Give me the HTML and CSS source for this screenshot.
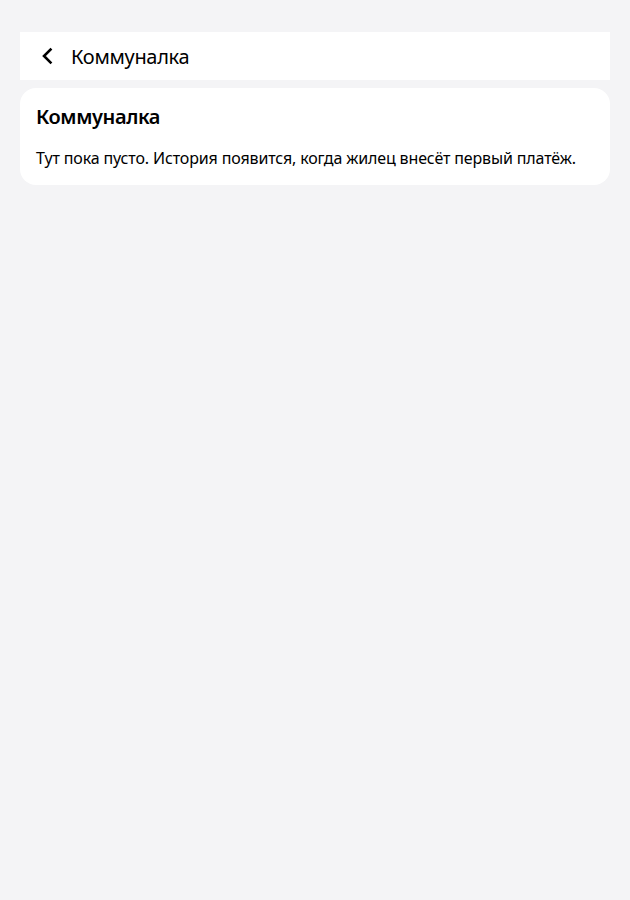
FILE: index.html
```html
<!DOCTYPE html>
<html lang="ru">
<head>
<meta charset="utf-8">
<link rel="stylesheet" href="styles.css">
</head>
<body>
<div class="page">
  <header class="topbar">
    <button class="back" aria-label="Назад">
      <svg width="24" height="24" viewBox="0 0 24 24" fill="none"><path d="M14.5 5.5 L8 12 L14.5 18.5" stroke="#000" stroke-width="2.6" stroke-linecap="square" stroke-linejoin="miter"/></svg>
    </button>
    <span class="topbar-title">Коммуналка</span>
  </header>
  <section class="card">
    <h2 class="card-title">Коммуналка</h2>
    <p class="card-text">Тут пока пусто. История появится, когда жилец внесёт первый платёж.</p>
  </section>
</div>
</body>
</html>
```
FILE: styles.css
```css
html, body {
  margin: 0;
  padding: 0;
  background: #f4f4f6;
  font-family: "Noto Sans", "Open Sans", sans-serif;
  color: #000;
}
.page {
  padding: 32px 20px;
  display: flex;
  flex-direction: column;
  gap: 8px;
}
.topbar {
  background: #fff;
  height: 48px;
  display: flex;
  align-items: center;
  padding-left: 16px;
  gap: 11px;
}
.back {
  width: 24px;
  height: 24px;
  padding: 0;
  border: 0;
  background: none;
  display: flex;
}
.topbar-title {
  font-size: 20px;
  letter-spacing: -0.3px;
}
.card {
  background: #fff;
  border-radius: 16px;
  padding: 16px;
}
.card-title {
  margin: 0;
  font-size: 20px;
  font-weight: 600;
  line-height: 26px;
  letter-spacing: -0.4px;
}
.card-text {
  margin: 17px 0 0;
  font-size: 16px;
  line-height: 22px;
  letter-spacing: -0.14px;
}
```
